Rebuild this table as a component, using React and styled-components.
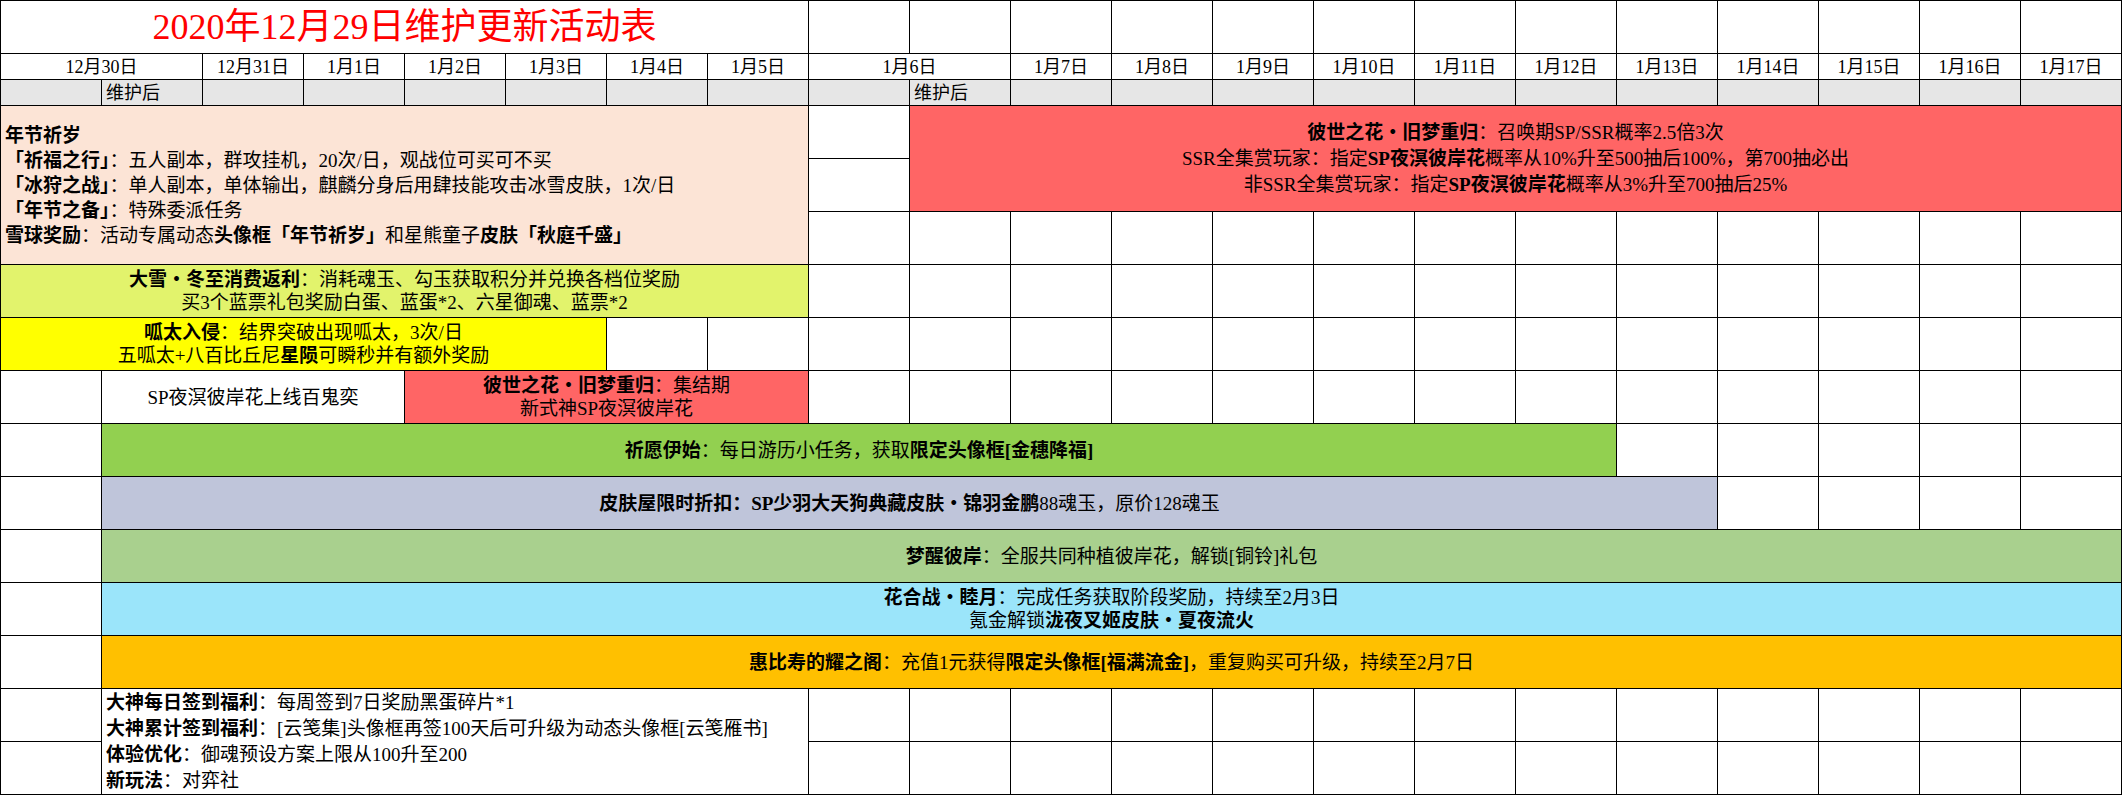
import React from 'react';
import styled, { createGlobalStyle } from 'styled-components';

const GlobalStyle = createGlobalStyle`
  html, body {
    margin: 0;
    padding: 0;
    background: #fff;
  }
  body {
    font-family: 'Liberation Serif', 'Noto Sans CJK SC', serif;
    color: #000;
  }
`;

const Sheet = styled.div`
  display: grid;
  grid-template-columns: repeat(21, 101px);
  grid-template-rows: 53px 26px 26px repeat(13, 53px);
  width: 2122px;
  border-top: 1px solid #000;
  border-left: 1px solid #000;
  box-sizing: border-box;
  overflow: hidden;
`;

const Cell = styled.div`
  grid-column: ${(p) => p.$c} / span ${(p) => p.$cs || 1};
  grid-row: ${(p) => p.$r} / span ${(p) => p.$rs || 1};
  background: ${(p) => p.$bg || '#fff'};
  color: ${(p) => p.$color || '#000'};
  border-right: 1px solid #000;
  border-bottom: 1px solid #000;
  box-sizing: border-box;
  display: flex;
  flex-direction: column;
  justify-content: center;
  align-items: ${(p) => (p.$left ? 'flex-start' : 'center')};
  padding: 0 ${(p) => (p.$left ? '4px' : '0')};
  font-size: ${(p) => p.$fs || 19}px;
  line-height: ${(p) => p.$lh || 23}px;
  white-space: nowrap;
  overflow: hidden;
  min-width: 0;
`;

const Line = styled.div``;

const B = styled.b`
  font-weight: 700;
`;

const GRAY = '#e6e6e6';

const dates = [
  [3, '12月31日'],
  [4, '1月1日'],
  [5, '1月2日'],
  [6, '1月3日'],
  [7, '1月4日'],
  [8, '1月5日'],
  [11, '1月7日'],
  [12, '1月8日'],
  [13, '1月9日'],
  [14, '1月10日'],
  [15, '1月11日'],
  [16, '1月12日'],
  [17, '1月13日'],
  [18, '1月14日'],
  [19, '1月15日'],
  [20, '1月16日'],
  [21, '1月17日'],
];

// merged / filled areas: r, c, rs, cs
const blocks = [
  { r: 1, c: 1, cs: 8 },
  { r: 2, c: 1, cs: 2 },
  { r: 2, c: 9, cs: 2 },
  ...dates.map(([c]) => ({ r: 2, c })),
  { r: 3, c: 2 },
  { r: 3, c: 10 },
  { r: 4, c: 1, rs: 3, cs: 8 },
  { r: 4, c: 10, rs: 2, cs: 12 },
  { r: 7, c: 1, cs: 8 },
  { r: 8, c: 1, cs: 6 },
  { r: 9, c: 2, cs: 3 },
  { r: 9, c: 5, cs: 4 },
  { r: 10, c: 2, cs: 15 },
  { r: 11, c: 2, cs: 16 },
  { r: 12, c: 2, cs: 20 },
  { r: 13, c: 2, cs: 20 },
  { r: 14, c: 2, cs: 20 },
  { r: 15, c: 2, rs: 2, cs: 7 },
];

const emptyCells = () => {
  const used = new Set();
  blocks.forEach(({ r, c, rs = 1, cs = 1 }) => {
    for (let i = r; i < r + rs; i++) {
      for (let j = c; j < c + cs; j++) used.add(`${i}-${j}`);
    }
  });
  const out = [];
  for (let r = 1; r <= 16; r++) {
    for (let c = 1; c <= 21; c++) {
      if (!used.has(`${r}-${c}`)) {
        out.push(<Cell key={`e${r}-${c}`} $r={r} $c={c} $bg={r === 3 ? GRAY : '#fff'} />);
      }
    }
  }
  return out;
};

const App = () => {
  return (
    <>
      <GlobalStyle />
      <Sheet>
        <Cell $r={1} $c={1} $cs={8} $fs={36} $lh={40} $color="#ff0000">
          2020年12月29日维护更新活动表
        </Cell>

        <Cell $r={2} $c={1} $cs={2} $fs={18} $lh={22}>12月30日</Cell>
        <Cell $r={2} $c={9} $cs={2} $fs={18} $lh={22}>1月6日</Cell>
        {dates.map(([c, t]) => (
          <Cell key={t} $r={2} $c={c} $fs={18} $lh={22}>
            {t}
          </Cell>
        ))}

        <Cell $r={3} $c={2} $bg={GRAY} $left $fs={18} $lh={22}>维护后</Cell>
        <Cell $r={3} $c={10} $bg={GRAY} $left $fs={18} $lh={22}>维护后</Cell>

        <Cell $r={4} $c={1} $rs={3} $cs={8} $bg="#fce4d6" $left $lh={25}>
          <Line><B>年节祈岁</B></Line>
          <Line><B>「祈福之行」</B>：五人副本，群攻挂机，20次/日，观战位可买可不买</Line>
          <Line><B>「冰狩之战」</B>：单人副本，单体输出，麒麟分身后用肆技能攻击冰雪皮肤，1次/日</Line>
          <Line><B>「年节之备」</B>：特殊委派任务</Line>
          <Line><B>雪球奖励</B>：活动专属动态<B>头像框「年节祈岁」</B>和星熊童子<B>皮肤「秋庭千盛」</B></Line>
        </Cell>

        <Cell $r={4} $c={10} $rs={2} $cs={12} $bg="#ff6565" $lh={26}>
          <Line><B>彼世之花・旧梦重归</B>：召唤期SP/SSR概率2.5倍3次</Line>
          <Line>SSR全集赏玩家：指定<B>SP夜溟彼岸花</B>概率从10%升至500抽后100%，第700抽必出</Line>
          <Line>非SSR全集赏玩家：指定<B>SP夜溟彼岸花</B>概率从3%升至700抽后25%</Line>
        </Cell>

        <Cell $r={7} $c={1} $cs={8} $bg="#e2f36c">
          <Line><B>大雪・冬至消费返利</B>：消耗魂玉、勾玉获取积分并兑换各档位奖励</Line>
          <Line>买3个蓝票礼包奖励白蛋、蓝蛋*2、六星御魂、蓝票*2</Line>
        </Cell>

        <Cell $r={8} $c={1} $cs={6} $bg="#ffff00">
          <Line><B>呱太入侵</B>：结界突破出现呱太，3次/日</Line>
          <Line>五呱太+八百比丘尼<B>星陨</B>可瞬秒并有额外奖励</Line>
        </Cell>

        <Cell $r={9} $c={2} $cs={3}>
          <Line>SP夜溟彼岸花上线百鬼奕</Line>
        </Cell>
        <Cell $r={9} $c={5} $cs={4} $bg="#ff6565">
          <Line><B>彼世之花・旧梦重归</B>：集结期</Line>
          <Line>新式神SP夜溟彼岸花</Line>
        </Cell>

        <Cell $r={10} $c={2} $cs={15} $bg="#92d050">
          <Line><B>祈愿伊始</B>：每日游历小任务，获取<B>限定头像框[金穗降福]</B></Line>
        </Cell>

        <Cell $r={11} $c={2} $cs={16} $bg="#bfc5da">
          <Line><B>皮肤屋限时折扣：SP少羽大天狗典藏皮肤・锦羽金鹏</B>88魂玉，原价128魂玉</Line>
        </Cell>

        <Cell $r={12} $c={2} $cs={20} $bg="#a9d08e">
          <Line><B>梦醒彼岸</B>：全服共同种植彼岸花，解锁[铜铃]礼包</Line>
        </Cell>

        <Cell $r={13} $c={2} $cs={20} $bg="#9be5fa">
          <Line><B>花合战・睦月</B>：完成任务获取阶段奖励，持续至2月3日</Line>
          <Line>氪金解锁<B>泷夜叉姬皮肤・夏夜流火</B></Line>
        </Cell>

        <Cell $r={14} $c={2} $cs={20} $bg="#ffc000">
          <Line><B>惠比寿的耀之阁</B>：充值1元获得<B>限定头像框[福满流金]</B>，重复购买可升级，持续至2月7日</Line>
        </Cell>

        <Cell $r={15} $c={2} $rs={2} $cs={7} $left $lh={26}>
          <Line><B>大神每日签到福利</B>：每周签到7日奖励黑蛋碎片*1</Line>
          <Line><B>大神累计签到福利</B>：[云笺集]头像框再签100天后可升级为动态头像框[云笺雁书]</Line>
          <Line><B>体验优化</B>：御魂预设方案上限从100升至200</Line>
          <Line><B>新玩法</B>：对弈社</Line>
        </Cell>

        {emptyCells()}
      </Sheet>
    </>
  );
};

export default App;
